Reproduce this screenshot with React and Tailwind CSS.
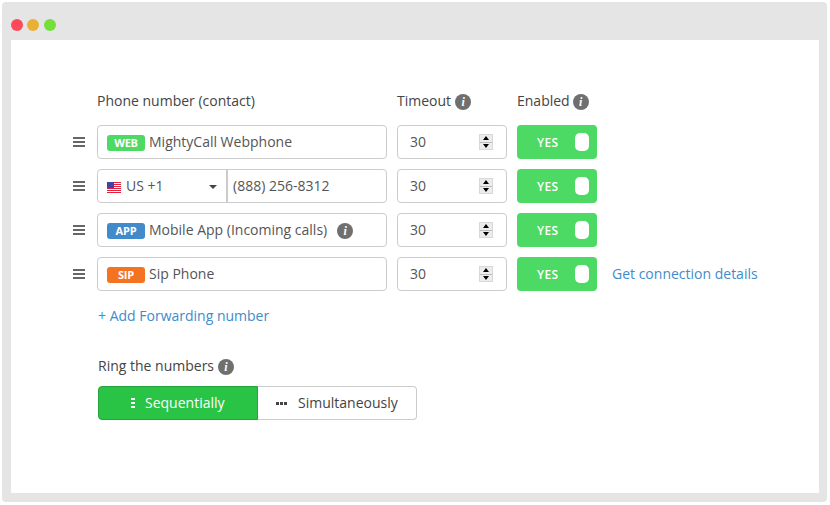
const InfoIcon = ({ className = '' }) => (
  <span
    className={`mt-1 inline-flex h-4 w-4 shrink-0 items-center justify-center rounded-full bg-[#6f6f6f] text-[12px] font-bold italic leading-none text-white ${className}`}
    style={{ fontFamily: '"Liberation Serif", serif' }}
  >
    i
  </span>
)

const Handle = () => (
  <div className="mr-3 flex w-3 shrink-0 flex-col gap-[2px]">
    <span className="h-[2px] bg-[#666]" />
    <span className="h-[2px] bg-[#666]" />
    <span className="h-[2px] bg-[#666]" />
  </div>
)

const Badge = ({ color, children }) => (
  <span className={`mr-[4px] mt-[4px] flex h-4 w-[38px] shrink-0 items-center justify-center rounded-[3px] pb-[2px] text-[11px] font-bold leading-none tracking-[-0.2px] text-white ${color}`}>
    {children}
  </span>
)

const Flag = () => (
  <svg width="14" height="11" viewBox="0 0 14 11" className="mr-[5px] mt-[5px] shrink-0">
    <rect width="14" height="11" fill="#fff" />
    <path d="M0 .5h14M0 2.5h14M0 4.5h14M0 6.5h14M0 8.5h14M0 10.5h14" stroke="#e0223c" strokeWidth="1" />
    <rect width="7" height="6" fill="#3d45a8" />
  </svg>
)

const Spinner = () => (
  <div className="ml-auto flex h-4 w-[14px] flex-col gap-px border border-[#d8d8d8] bg-[#bdbdbd]">
    <span className="flex flex-1 items-center justify-center bg-[#ececec]">
      <span className="h-0 w-0 border-x-[3px] border-b-[4px] border-x-transparent border-b-black" />
    </span>
    <span className="flex flex-1 items-center justify-center bg-[#ececec]">
      <span className="h-0 w-0 border-x-[3px] border-t-[4px] border-x-transparent border-t-black" />
    </span>
  </div>
)

const Row = ({ children, link }) => (
  <div className="flex h-[34px] items-center">
    <Handle />
    <div className="w-[290px] shrink-0">{children}</div>
    <div className="ml-[10px] flex h-[34px] w-[110px] items-center rounded-[4px] border border-[#ccc] pl-3 pr-[13px] text-[#555]">
      <span className="-mt-[2px]">30</span>
      <Spinner />
    </div>
    <div className="ml-[10px] flex h-[34px] w-20 items-center rounded-[4px] bg-[#4cd964] pl-5 pr-[8px] text-[12px] font-semibold tracking-[0.4px] text-white">
      <span className="mt-[2px]">YES</span>
      <span className="ml-auto h-[18px] w-[14px] rounded-[5px] bg-white" />
    </div>
    {link && <a className="-mt-[2px] ml-[15px] text-[#428bca]">{link}</a>}
  </div>
)

const Field = ({ children }) => (
  <div className="flex h-[34px] items-center rounded-[4px] border border-[#ccc] pb-[2px] pl-[9px] text-[#555]">{children}</div>
)

export default function App() {
  return (
    <div
      className="m-[2px] flex h-[500px] w-[825px] flex-col rounded-[4px] bg-[#e5e5e5] pb-[9px] pl-[9px] pr-2 text-[14px] text-[#555]"
      style={{ fontFamily: '"Open Sans", sans-serif' }}
    >
      <div className="flex h-[38px] shrink-0 items-center gap-1 pt-[8px]">
        <span className="h-3 w-3 rounded-full bg-[#fc4a5b]" />
        <span className="h-3 w-3 rounded-full bg-[#e9b035]" />
        <span className="ml-px h-3 w-3 rounded-full bg-[#74df3b]" />
      </div>
      <div className="flex-1 bg-white pl-[62px] pt-[51px]">
        <div className="mb-[14px] flex h-5 items-center pl-6 pb-[2px] text-[#444]">
          <span className="w-[300px]">Phone number (contact)</span>
          <span className="flex w-[120px] items-center gap-1">
            Timeout <InfoIcon />
          </span>
          <span className="flex items-center gap-[3px]">
            Enabled <InfoIcon />
          </span>
        </div>
        <div className="flex flex-col gap-[10px]">
          <Row>
            <Field>
              <Badge color="bg-[#4cd964]">WEB</Badge>
              MightyCall Webphone
            </Field>
          </Row>
          <Row>
            <div className="flex h-[34px] rounded-[4px] border border-[#ccc] pb-[2px] text-[#555]">
              <div className="-mb-[2px] flex w-[130px] items-center border-r-2 border-[#ccc] pb-[2px] pl-[9px] pr-[9px]">
                <Flag />
                US +1
                <span className="ml-auto mt-[4px] h-0 w-0 border-x-[4px] border-t-[4px] border-x-transparent border-t-[#444]" />
              </div>
              <div className="flex items-center pl-[5px]">(888) 256-8312</div>
            </div>
          </Row>
          <Row>
            <Field>
              <Badge color="bg-[#428bca]">APP</Badge>
              Mobile App (Incoming calls)
              <InfoIcon className="ml-[10px]" />
            </Field>
          </Row>
          <Row link="Get connection details">
            <Field>
              <Badge color="bg-[#f47321]">SIP</Badge>
              Sip Phone
            </Field>
          </Row>
        </div>
        <div className="ml-[25px] mt-[15px] leading-5 text-[#428bca]">+ Add Forwarding number</div>
        <div className="ml-[25px] mt-[30px] flex h-5 items-center gap-1 pb-[2px] text-[#444]">
          Ring the numbers <InfoIcon />
        </div>
        <div className="ml-[25px] mt-[10px] flex h-[34px] w-[319px]">
          <div className="flex w-40 items-center rounded-l-[4px] border border-[#23a33a] bg-[#29c445] pb-[2px] pl-[32px] text-white">
            <span className="mr-[10px] mt-[2px] flex w-1 flex-col gap-[2px]">
              <span className="h-[2px] bg-white" />
              <span className="h-[2px] bg-white" />
              <span className="h-[2px] bg-white" />
            </span>
            Sequentially
          </div>
          <div className="flex flex-1 items-center rounded-r-[4px] border border-l-0 border-[#ccc] pb-[2px] pl-[18px] text-[#444]">
            <span className="mr-[11px] mt-[3px] flex gap-px">
              <span className="h-[3px] w-[3px] bg-[#444]" />
              <span className="h-[3px] w-[3px] bg-[#444]" />
              <span className="h-[3px] w-[3px] bg-[#444]" />
            </span>
            Simultaneously
          </div>
        </div>
      </div>
    </div>
  )
}
